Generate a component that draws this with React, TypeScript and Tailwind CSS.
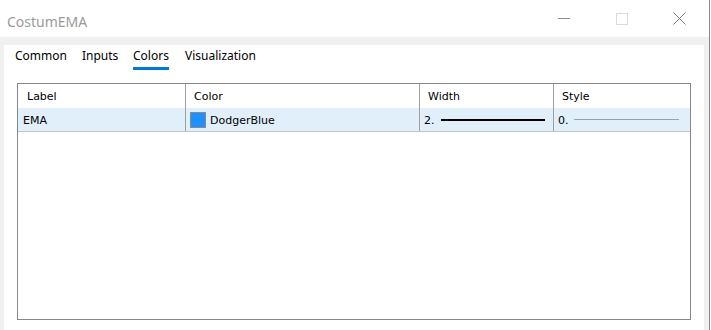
import React from "react";

const tabs = [
  { name: "Common", w: "w-[67px]" },
  { name: "Inputs", w: "w-[51px]" },
  { name: "Colors", w: "w-[52px]", active: true },
  { name: "Visualization", w: "" },
];

export default function App() {
  return (
    <div className="flex h-[330px] w-[711px] overflow-hidden bg-white">
      <div className="flex w-[710px] flex-col border-r border-[#8a8a8a]">
        <TitleBar />
        <div className="flex flex-1 flex-col bg-[#f0f0f0] pl-[4px] pr-[5px] pt-[8px]">
          <div className="flex flex-1 flex-col bg-white">
            <div className="flex h-[25px] items-start pl-[11px] font-['Noto_Sans',sans-serif] text-[12px] text-black">
              {tabs.map((t) => (
                <div key={t.name} className={`${t.w} flex h-full`}>
                  <span
                    className={`flex h-full items-start pt-[3px] leading-[16px] ${
                      t.active ? "border-b-[3px] border-[#0078d7]" : ""
                    }`}
                  >
                    {t.name}
                  </span>
                </div>
              ))}
            </div>
            <ColorsGrid />
          </div>
        </div>
      </div>
    </div>
  );
}

function TitleBar() {
  return (
    <div className="flex h-[37px] shrink-0 items-center bg-white">
      <div className="flex-1 pl-[7px] pt-[5px] font-['Noto_Sans',sans-serif] text-[14px] text-[#9a9a9a]">
        CostumEMA
      </div>
      <div className="flex h-full w-[58px] items-center justify-center">
        <div className="h-px w-[12px] bg-[#8c8c8c]" />
      </div>
      <div className="flex h-full w-[58px] items-center justify-center">
        <div className="h-[12px] w-[12px] border border-[#d9d9d9]" />
      </div>
      <div className="flex h-full w-[58px] items-center justify-center pr-[1px]">
        <svg width="13" height="13" viewBox="0 0 13 13">
          <path d="M0.5 0.5 L12.5 12.5 M12.5 0.5 L0.5 12.5" stroke="#7a7a7a" strokeWidth="1" fill="none" />
        </svg>
      </div>
    </div>
  );
}

function Txt({ children }: { children: React.ReactNode }) {
  return <span className="mt-[3px]">{children}</span>;
}

function ColorsGrid() {
  return (
    <div className="mx-[13px] mb-[10px] mt-[13px] flex flex-1 flex-col border border-[#828790] font-['DejaVu_Sans',sans-serif] text-[11px] text-black">
      <div className="flex h-[24px] shrink-0">
        <div className="flex w-[168px] items-center border-r border-[#a0a0a0] pl-[9px]"><Txt>Label</Txt></div>
        <div className="flex w-[234px] items-center border-r border-[#a0a0a0] pl-[8px]"><Txt>Color</Txt></div>
        <div className="flex w-[134px] items-center border-r border-[#a0a0a0] pl-[8px]"><Txt>Width</Txt></div>
        <div className="flex flex-1 items-center pl-[8px]"><Txt>Style</Txt></div>
      </div>
      <div className="flex h-[24px] shrink-0 border-b border-[#c4c4c4] bg-[#e1effa]">
        <div className="flex w-[168px] items-center border-r border-[#a0a0a0] pl-[5px]"><Txt>EMA</Txt></div>
        <div className="flex w-[234px] items-center border-r border-[#a0a0a0] pl-[4px]">
          <div className="h-[16px] w-[16px] border border-[#8a8a8a] bg-[#1e90ff]" />
          <span className="ml-[4px] mt-[3px]">DodgerBlue</span>
        </div>
        <div className="flex w-[134px] items-center border-r border-[#a0a0a0] pl-[4px]">
          <Txt>2.</Txt>
          <div className="ml-[6px] h-[2px] w-[104px] bg-black" />
        </div>
        <div className="flex flex-1 items-center pl-[4px]">
          <Txt>0.</Txt>
          <div className="ml-[5px] h-px w-[105px] bg-[#a0a0a0]" />
        </div>
      </div>
    </div>
  );
}
